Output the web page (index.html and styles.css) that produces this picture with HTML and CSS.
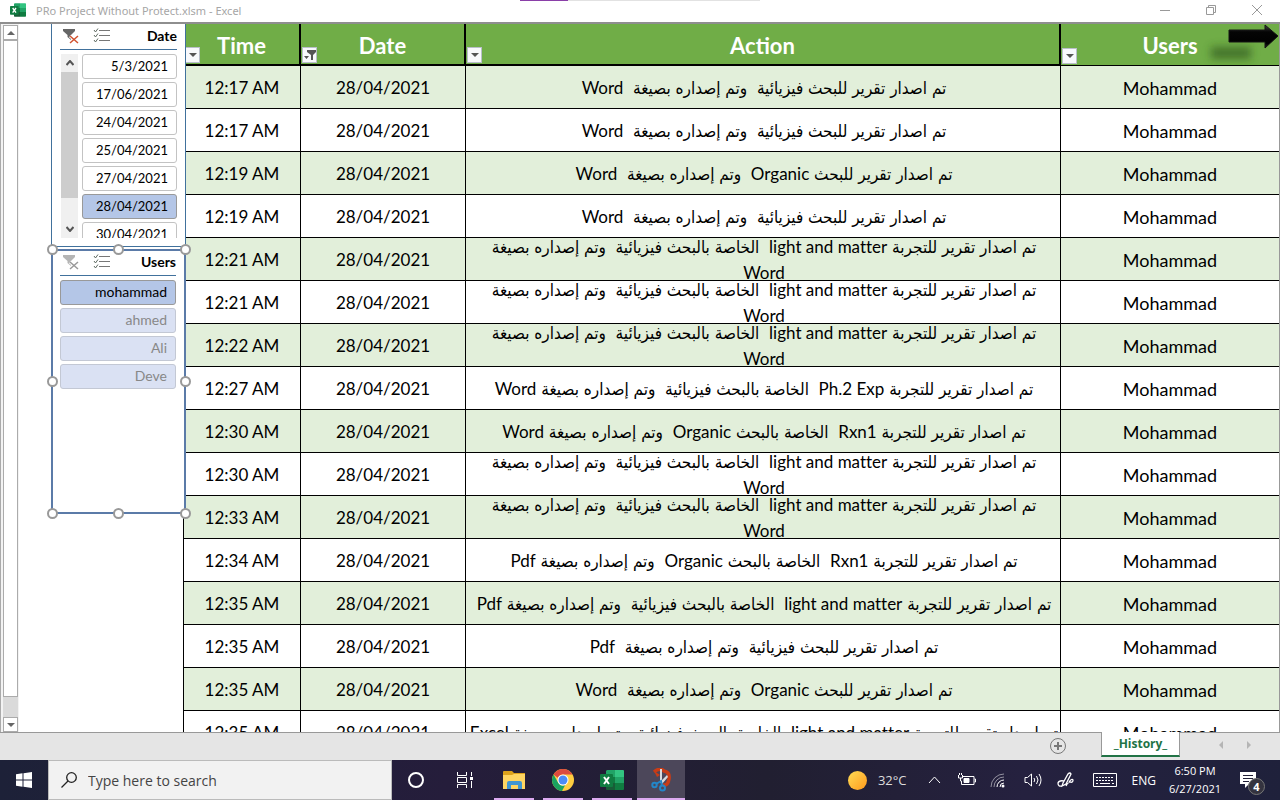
FILE: index.html
```
<!DOCTYPE html>
<html lang="en">
<head>
<meta charset="utf-8">
<title>PRo Project Without Protect.xlsm - Excel</title>
<link rel="stylesheet" href="styles.css">
</head>
<body>
<svg class="defs" aria-hidden="true">
  <symbol id="excel" viewBox="0 0 24 22">
    <path fill="#21a366" d="M7 1h8v7H6V2z"/><path fill="#33c481" d="M15 1h8q1 0 1 1v6h-9z"/>
    <path fill="#107c41" d="M6 8h9v6H6z"/><path fill="#21a366" d="M15 8h9v6h-9z"/>
    <path fill="#185c37" d="M6 14h9v7H7q-1 0-1-1z"/><path fill="#107c41" d="M15 14h9v6q0 1-1 1h-8z"/>
    <rect x="0" y="5" width="13" height="13" rx="1" fill="#107c41"/>
    <path d="M4 8l5 7M9 8l-5 7" stroke="#fff" stroke-width="2"/>
  </symbol>
  <symbol id="multi" viewBox="0 0 18 15">
    <path d="M6 2.500h11M6 7.500h11M6 12.500h11" stroke="#777" fill="none"/>
    <path d="M1 2l1.500 2L5 .5M1 7l1.500 2L5 5.500M1 12l1.500 2L5 10.500" stroke="#5f6b62" fill="none"/>
  </symbol>
  <symbol id="clear" viewBox="0 0 16 16">
    <path d="M0 1h12v2L8 7v5L4.500 9V7L0 3z" fill="currentColor"/>
    <path d="M7 8l8 7M15 8l-8 7" stroke="#fff" stroke-width="3"/>
    <path class="clear-x" d="M7 8l8 7M15 8l-8 7" stroke-width="1.500"/>
  </symbol>
</svg>

<header class="titlebar">
  <svg class="app-icon"><use href="#excel"/></svg>
  <span class="title">PRo Project Without Protect.xlsm - Excel</span>
  <span class="progress"><i></i></span>
  <div class="win-buttons">
    <button aria-label="Minimize"><svg viewBox="0 0 12 12"><path d="M1 6.500h10"/></svg></button>
    <button aria-label="Restore"><svg viewBox="0 0 12 12"><path d="M1.500 3.500h7v7h-7zM3.500 3.500v-2h7v7h-2"/></svg></button>
    <button aria-label="Close"><svg viewBox="0 0 12 12"><path d="M1 1l10 10M11 1L1 11"/></svg></button>
  </div>
</header>

<main class="workspace">
  <div class="vscroll">
    <button class="vs-btn" aria-label="Scroll up"><svg viewBox="0 0 8 4"><path d="M0 4l4-4 4 4z"/></svg></button>
    <div class="vs-thumb"></div>
    <div class="vs-gap"></div>
    <button class="vs-btn" aria-label="Scroll down"><svg viewBox="0 0 8 4"><path d="M0 0l4 4 4-4z"/></svg></button>
  </div>

  <aside class="slicers">
    <section class="slicer slicer-date">
      <div class="slicer-head">
        <button class="clear on" aria-label="Clear filter"><svg><use href="#clear"/></svg></button>
        <button class="multi" aria-label="Multi-select"><svg><use href="#multi"/></svg></button>
        <h2>Date</h2>
      </div>
      <div class="slicer-body">
        <div class="mini-scroll">
          <button aria-label="Up"><svg viewBox="0 0 8 6"><path d="M.5 5L4 1l3.500 4"/></svg></button>
          <span></span>
          <button aria-label="Down"><svg viewBox="0 0 8 6"><path d="M.5 1L4 5l3.500-4"/></svg></button>
        </div>
        <div class="items">
          <button>5/3/2021</button><button>17/06/2021</button><button>24/04/2021</button><button>25/04/2021</button><button>27/04/2021</button><button class="sel">28/04/2021</button><button>30/04/2021</button>
        </div>
      </div>
    </section>
    <section class="slicer slicer-users">
      <div class="slicer-head">
        <button class="clear" aria-label="Clear filter"><svg><use href="#clear"/></svg></button>
        <button class="multi" aria-label="Multi-select"><svg><use href="#multi"/></svg></button>
        <h2>Users</h2>
      </div>
      <div class="items">
        <button class="sel">mohammad</button><button class="off">ahmed</button><button class="off">Ali</button><button class="off">Deve</button>
      </div>
      <i class="handle t l"></i><i class="handle t c"></i><i class="handle t r"></i>
      <i class="handle m l"></i><i class="handle m r"></i>
      <i class="handle b l"></i><i class="handle b c"></i><i class="handle b r"></i>
    </section>
  </aside>

  <div class="sheet">
    <table>
      <colgroup><col class="c-time"><col class="c-date"><col><col class="c-user"></colgroup>
      <thead>
        <tr>
          <th><button class="filter" aria-label="Filter Time"><svg viewBox="0 0 8 4"><path d="M0 0h8L4 4z"/></svg></button>Time</th>
          <th><button class="filter" aria-label="Filter Date"><svg class="active" viewBox="0 0 12 10"><path d="M3 0h9v2L9 5v5H7V5L3 2zM0 6h5L2.500 9z"/></svg></button>Date</th>
          <th><button class="filter" aria-label="Filter Action"><svg viewBox="0 0 8 4"><path d="M0 0h8L4 4z"/></svg></button>Action</th>
          <th><button class="filter" aria-label="Filter Users"><svg viewBox="0 0 8 4"><path d="M0 0h8L4 4z"/></svg></button>Users
            <svg class="arrow" viewBox="0 0 80 46"><defs><linearGradient id="ag" x2="0" y2="1"><stop offset="0" stop-color="#444"/><stop offset=".3" stop-color="#050505"/><stop offset=".8" stop-color="#000"/><stop offset="1" stop-color="#2a2a2a"/></linearGradient><filter id="soft" x="-30%" y="-80%" width="160%" height="260%"><feGaussianBlur stdDeviation="4"/></filter></defs><rect x="12" y="23" width="40" height="12" fill="#274d14" opacity=".6" filter="url(#soft)"/><path d="M30 6h36V1l13 11-13 12v-6H30z" fill="url(#ag)" stroke="#151515"/></svg>
          </th>
        </tr>
      </thead>
      <tbody>
        <tr><td>12:17 AM</td><td>28/04/2021</td><td dir="rtl"><div><p>تم اصدار تقرير للبحث فيزيائية  وتم إصداره بصيغة  <b>Word</b></p></div></td><td>Mohammad</td></tr>
        <tr><td>12:17 AM</td><td>28/04/2021</td><td dir="rtl"><div><p>تم اصدار تقرير للبحث فيزيائية  وتم إصداره بصيغة  <b>Word</b></p></div></td><td>Mohammad</td></tr>
        <tr><td>12:19 AM</td><td>28/04/2021</td><td dir="rtl"><div><p>تم اصدار تقرير للبحث <b>Organic</b>  وتم إصداره بصيغة  <b>Word</b></p></div></td><td>Mohammad</td></tr>
        <tr><td>12:19 AM</td><td>28/04/2021</td><td dir="rtl"><div><p>تم اصدار تقرير للبحث فيزيائية  وتم إصداره بصيغة  <b>Word</b></p></div></td><td>Mohammad</td></tr>
        <tr><td>12:21 AM</td><td>28/04/2021</td><td dir="rtl"><div><p>تم اصدار تقرير للتجربة <b>light and matter</b>  الخاصة بالبحث فيزيائية  وتم إصداره بصيغة<br><b>Word</b></p></div></td><td>Mohammad</td></tr>
        <tr><td>12:21 AM</td><td>28/04/2021</td><td dir="rtl"><div><p>تم اصدار تقرير للتجربة <b>light and matter</b>  الخاصة بالبحث فيزيائية  وتم إصداره بصيغة<br><b>Word</b></p></div></td><td>Mohammad</td></tr>
        <tr><td>12:22 AM</td><td>28/04/2021</td><td dir="rtl"><div><p>تم اصدار تقرير للتجربة <b>light and matter</b>  الخاصة بالبحث فيزيائية  وتم إصداره بصيغة<br><b>Word</b></p></div></td><td>Mohammad</td></tr>
        <tr><td>12:27 AM</td><td>28/04/2021</td><td dir="rtl"><div><p>تم اصدار تقرير للتجربة <b>Ph.2 Exp</b>  الخاصة بالبحث فيزيائية  وتم إصداره بصيغة <b>Word</b></p></div></td><td>Mohammad</td></tr>
        <tr><td>12:30 AM</td><td>28/04/2021</td><td dir="rtl"><div><p>تم اصدار تقرير للتجربة <b>Rxn1</b>  الخاصة بالبحث <b>Organic</b>  وتم إصداره بصيغة <b>Word</b></p></div></td><td>Mohammad</td></tr>
        <tr><td>12:30 AM</td><td>28/04/2021</td><td dir="rtl"><div><p>تم اصدار تقرير للتجربة <b>light and matter</b>  الخاصة بالبحث فيزيائية  وتم إصداره بصيغة<br><b>Word</b></p></div></td><td>Mohammad</td></tr>
        <tr><td>12:33 AM</td><td>28/04/2021</td><td dir="rtl"><div><p>تم اصدار تقرير للتجربة <b>light and matter</b>  الخاصة بالبحث فيزيائية  وتم إصداره بصيغة<br><b>Word</b></p></div></td><td>Mohammad</td></tr>
        <tr><td>12:34 AM</td><td>28/04/2021</td><td dir="rtl"><div><p>تم اصدار تقرير للتجربة <b>Rxn1</b>  الخاصة بالبحث <b>Organic</b>  وتم إصداره بصيغة <b>Pdf</b></p></div></td><td>Mohammad</td></tr>
        <tr><td>12:35 AM</td><td>28/04/2021</td><td dir="rtl"><div><p>تم اصدار تقرير للتجربة <b>light and matter</b>  الخاصة بالبحث فيزيائية  وتم إصداره بصيغة <b>Pdf</b></p></div></td><td>Mohammad</td></tr>
        <tr><td>12:35 AM</td><td>28/04/2021</td><td dir="rtl"><div><p>تم اصدار تقرير للبحث فيزيائية  وتم إصداره بصيغة  <b>Pdf</b></p></div></td><td>Mohammad</td></tr>
        <tr><td>12:35 AM</td><td>28/04/2021</td><td dir="rtl"><div><p>تم اصدار تقرير للبحث <b>Organic</b>  وتم إصداره بصيغة  <b>Word</b></p></div></td><td>Mohammad</td></tr>
        <tr><td>12:35 AM</td><td>28/04/2021</td><td dir="rtl"><div><p>تم اصدار تقرير للتجربة <b>light and matter</b>  الخاصة بالبحث فيزيائية  وتم إصداره بصيغة <b>Excel</b></p></div></td><td>Mohammad</td></tr>
      </tbody>
    </table>
  </div>
</main>

<nav class="tabs">
  <button class="add" aria-label="New sheet"><svg viewBox="0 0 16 16"><circle cx="8" cy="8" r="7.500" fill="none" stroke="#777"/><path d="M8 4v8M4 8h8" stroke="#777" stroke-width="2"/></svg></button>
  <button class="tab">_History_</button>
  <div class="tab-nav">
    <button aria-label="Previous sheet"><svg viewBox="0 0 4 8"><path d="M4 0v8L0 4z"/></svg></button>
    <button aria-label="Next sheet"><svg viewBox="0 0 4 8"><path d="M0 0v8l4-4z"/></svg></button>
  </div>
</nav>

<footer class="taskbar">
  <button class="start" aria-label="Start"><svg viewBox="0 0 16 16"><path fill="#fff" d="M0 2.200L6.500 1.300v6.200H0zM7.500 1.200L16 0v7.500H7.500zM0 8.500h6.500v6.200L0 13.800zM7.500 8.500H16V16l-8.500-1.200z"/></svg></button>
  <label class="search">
    <svg viewBox="0 0 16 16"><circle cx="10.500" cy="5.500" r="4.800"/><path d="M7 9L.5 15.500"/></svg>
    <input type="text" placeholder="Type here to search" aria-label="Search">
  </label>
  <div class="apps">
    <button aria-label="Cortana"><svg viewBox="0 0 24 24"><circle cx="12" cy="12" r="7" fill="none" stroke="#fff" stroke-width="2"/></svg></button>
    <button aria-label="Task View"><svg viewBox="0 0 24 24"><path d="M4.500 4v3.500h9V4M4.500 20v-3.500h9V20M4.500 9.500h9v5h-9zM18.500 4v4M18.500 13v7" fill="none" stroke="#fff"/><path d="M17 9h3v3h-3z" fill="#fff"/></svg></button>
    <button class="run" aria-label="File Explorer"><svg viewBox="0 0 24 24"><path d="M1 4q0-1 1-1h8l2 2h11v4H1z" fill="#dda21b"/><path d="M1 7h9l2-1h11v15H1z" fill="#ffd561"/><path d="M5 21v-6q0-2 2-2h11q2 0 2 2v6h-4v-4H9v4z" fill="#4096d2"/></svg></button>
    <button class="run" aria-label="Chrome"><svg viewBox="0 0 24 24"><circle cx="12" cy="12" r="11" fill="#ffcd40"/><path d="M2.500 6.500A11 11 0 0 1 21.500 6.500H12a5.500 5.500 0 0 0-5 3.500z" fill="#dc4b3e"/><path d="M2.500 6.500L7.200 14.800a5.500 5.500 0 0 0 7 2.200L11 23A11 11 0 0 1 2.500 6.500z" fill="#1aa260"/><circle cx="12" cy="12" r="5.500" fill="#fff"/><circle cx="12" cy="12" r="4.500" fill="#4c8bf5"/></svg></button>
    <button class="run" aria-label="Excel"><svg><use href="#excel"/></svg></button>
    <button class="run current" aria-label="Snipping Tool"><svg viewBox="0 0 24 24"><path d="M5 4q6-5 10-1 6 1 5 8-1 7-6 6" fill="none" stroke="#c83c16" stroke-width="3.500"/><path d="M5 3l6 4-3 2z" fill="#c83c16"/><path d="M11 1h2v14h-2zM12 13l6-6 1 2-6 7z" fill="#d8dadd"/><circle cx="5.500" cy="17" r="2.200" fill="none" stroke="#2386c8" stroke-width="2"/><circle cx="13.500" cy="20" r="2.500" fill="none" stroke="#2386c8" stroke-width="2"/><path d="M7 16l5-3 1 5" fill="none" stroke="#2386c8" stroke-width="2"/></svg></button>
  </div>
  <div class="tray">
    <i class="sun"></i><span class="temp">32°C</span>
    <button aria-label="Show hidden icons"><svg viewBox="0 0 20 20"><path d="M5 13l5.500-6 5.500 6"/></svg></button>
    <button aria-label="Battery"><svg viewBox="0 0 20 20"><path d="M6 6.500h11v8H4.500V11M17.500 9h1v3h-1M1.500 5v3h4V5M2.500 3v2M4.500 3v2M3.500 8v3h1"/><path d="M7 8.500h5v4H7z" fill="#fff"/></svg></button>
    <button aria-label="Wi-Fi"><svg viewBox="0 0 20 20"><path d="M7 17a7 7 0 0 1 7-7M10 17a4 4 0 0 1 4-4"/><path d="M1 17A13 13 0 0 1 14 4M4 17A10 10 0 0 1 14 7" opacity=".5"/><circle cx="13" cy="16" r="1.500" fill="#fff" stroke="none"/></svg></button>
    <button aria-label="Volume"><svg viewBox="0 0 20 20"><path d="M2 7.500h2.500L8.500 4v12l-4-3.500H2zM11 8q1.500 2 0 4M13.500 6q3 4 0 8M16 4q4 6 0 12"/></svg></button>
    <button aria-label="Pen"><svg viewBox="0 0 20 20"><path d="M7 13L12 4q2-2 3 0L10 14l-4 2zM8 11q-5-1-6 2 0 4 4 3M13 12q3-4 4-2 0 3-3 2-3 1-4 4" stroke-width="1.300"/></svg></button>
    <button class="kbd" aria-label="Touch keyboard"><svg viewBox="0 0 24 14"><path d="M.5 .5h23v13H.5z"/><path d="M3 4.500h18M3 7.500h18" stroke-dasharray="2 1"/><path d="M3 10.500h2M7 10.500h10M19 10.500h2"/></svg></button>
    <span class="lang">ENG</span>
    <time class="clock">6:50 PM<br>6/27/2021</time>
    <button class="notice" aria-label="Notifications"><svg viewBox="0 0 16 16"><path d="M0 0h16v12H9l-4 4v-4H0z" fill="#fff" stroke="none"/><path d="M3 3.500h10M3 6.500h10M3 9.500h6" stroke="#222038"/></svg><span class="badge">4</span></button>
  </div>
</footer>
</body>
</html>
```
FILE: styles.css
```
* { box-sizing: border-box; }
body { margin: 0; height: 100vh; display: flex; flex-direction: column; overflow: hidden; background: #fff; font-family: "Open Sans", "Noto Sans", sans-serif; }
button { margin: 0; padding: 0; border: 0; background: none; font: inherit; color: inherit; display: flex; align-items: center; justify-content: center; }
svg { display: block; flex: none; }
.defs { position: absolute; width: 0; height: 0; }

.titlebar { position: relative; flex: none; height: 24px; display: flex; align-items: center; padding: 0 17px 2px 10px; border-bottom: 2px solid #8e8e8e; color: #a6a6a6; }
.app-icon { width: 16px; height: 16px; }
.title { margin-left: 10px; font-family: "Noto Sans", sans-serif; font-size: 11px; }
.progress { position: absolute; top: 0; left: 40.6%; width: 18.8%; height: 1px; background: #e2e2e2; }
.progress i { display: block; width: 20%; height: 1px; background: #8a3fa8; }
.win-buttons { margin-left: auto; display: flex; gap: 34px; }
.win-buttons svg { width: 12px; height: 12px; fill: none; stroke: #999; }

.workspace { flex: 1; min-height: 0; display: flex; overflow: hidden; }
.vscroll { flex: none; width: 19px; display: flex; flex-direction: column; border-left: 1px solid #aaa; padding: 1px 1px 0 2px; background: #f3f3f3; }
.vs-btn { height: 15px; flex: none; border: 1px solid #ababab; background: #fff; }
.vs-btn svg { width: 8px; height: 4px; fill: #666; }
.vs-thumb { flex: 1; border: 1px solid #ababab; background: #fff; }
.vs-gap { height: 20px; background: #dadada; }

.slicers { position: relative; z-index: 1; flex: none; width: 164px; padding-left: 32px; display: flex; flex-direction: column; gap: 2px; }
.slicer { width: 135px; background: #fff; border: 1px solid #41719c; padding: 0 8px; font-family: Lato, sans-serif; font-size: 13px; color: #000; }
.slicer-date { height: 223px; border-top: 0; }
.slicer-users { position: relative; height: 265px; border: 2px solid #5b7ba8; padding: 0 8px 0 7px; font-size: 14px; }
.slicer-head { display: flex; align-items: center; height: 26px; border-bottom: 1px solid #41719c; padding: 0 0 2px 3px; }
.slicer-users .slicer-head { height: 25px; padding-bottom: 3px; }
.slicer-head h2 { margin: 0 0 0 auto; font-size: 14px; font-weight: 700; }
.slicer-head .clear svg { width: 16px; height: 16px; }
.slicer-head .multi { margin-left: 14px; }
.slicer-head .multi svg { width: 18px; height: 15px; }
.clear { color: #b5b5b5; --cross: #999; }
.clear.on { color: #666; --cross: #d2522f; }
.clear-x { stroke: var(--cross); }
.slicer-body { display: flex; gap: 4px; height: 188px; padding-top: 4px; overflow: hidden; }
.mini-scroll { width: 17px; margin-left: 1px; flex: none; display: flex; flex-direction: column; background: #f0f0f0; }
.mini-scroll button { height: 18px; flex: none; }
.mini-scroll svg { width: 8px; height: 6px; fill: none; stroke: #555; stroke-width: 2; }
.mini-scroll span { height: 126px; background: #cdcdcd; margin-bottom: auto; }
.items { flex: 1; display: flex; flex-direction: column; gap: 3px; }
.slicer-users .items { padding-top: 4px; }
.items button { flex: none; height: 25px; padding: 0 8px 2px; justify-content: flex-end; border: 1px solid #c3c3c3; border-radius: 3px; background: #fff; }
.items .sel { background: #b4c6e7; border-color: #999; }
.items .off { background: #dae1f3; border-color: #c3c8d4; color: #888; }
.handle { position: absolute; width: 11px; height: 11px; border: 2px solid #999; border-radius: 50%; background: #fff; }
.handle.t { top: -7px; } .handle.m { top: 125px; } .handle.b { bottom: -7px; }
.handle.l { left: -6px; } .handle.c { left: 60px; } .handle.r { right: -7px; }

.sheet { flex: 1; min-width: 0; overflow: hidden; border-right: 1px solid #999; }
table { width: 100%; table-layout: fixed; border-collapse: separate; border-spacing: 0; font-family: Lato, "DejaVu Sans Condensed", sans-serif; font-size: 17px; color: #000; border-left: 1px solid #000; }
.c-time { width: 117px; } .c-date { width: 165px; } .c-user { width: 218px; }
th { position: relative; height: 42px; padding: 3px 0 0; background: #70ad47; color: #fff; font-size: 22px; line-height: 26px; border-right: 2px solid #000; border-bottom: 2px solid #000; }
th:last-child { border-right: 0; border-bottom-width: 1px; }
td { height: 43px; padding: 1px 0 0; text-align: center; white-space: pre; border-right: 1px solid #000; border-bottom: 1px solid #000; }
td:last-child { border-right: 0; font-size: 18px; }
tbody tr:nth-child(odd) { background: #e2efda; }
td div { height: 41px; display: flex; flex-direction: column; justify-content: center; overflow: hidden; font-family: "DejaVu Sans Condensed", sans-serif; }
td p { flex: none; margin: 0; padding-top: 1px; line-height: 26px; }
td b { font-family: Lato, sans-serif; font-weight: 400; font-size: 17px; line-height: 20px; font-variant-ligatures: none; }
.filter { position: absolute; left: 1px; bottom: 1px; width: 15px; height: 16px; border: 1px solid #b9bfc9; background: #f8f9fc; }
.filter svg { width: 8px; height: 4px; fill: #555; }
.filter .active { width: 12px; height: 10px; }
.arrow { position: absolute; top: 0; right: 0; width: 80px; height: 46px; }

.tabs { flex: none; height: 28px; display: flex; align-items: flex-start; background: #e5e5e5; border-top: 1px solid #999; padding-right: 29px; }
.add { margin: 5px 35px 0 auto; }
.add svg { width: 16px; height: 16px; }
.tab { width: 79px; height: 25px; margin-top: -1px; background: #fff; border: 1px solid #999; border-top: 0; border-bottom: 2px solid #217346; color: #217346; font-size: 12px; font-weight: 700; }
.tab-nav { display: flex; gap: 24px; margin: 8px 0 0 39px; }
.tab-nav svg { width: 4px; height: 8px; fill: #b5b5b5; }

.taskbar { flex: none; height: 40px; display: flex; background: linear-gradient(90deg, #1d2138, #251d3b 35%, #211f31 60%, #25213f 80%, #1f213b); color: #fff; }
.start { width: 48px; }
.start svg { width: 16px; height: 16px; }
.search { width: 344px; display: flex; align-items: center; background: #f2f2f2; border: 1px solid #bbb; padding-left: 12px; gap: 11px; }
.search svg { width: 16px; height: 16px; fill: none; stroke: #222; stroke-width: 1.300; }
.search input { flex: 1; min-width: 0; border: 0; padding: 0; background: none; outline: 0; font: 14px "Open Sans", sans-serif; color: #444; }
.search input::placeholder { color: #444; opacity: 1; }
.apps { display: flex; gap: 1px; }
.apps button { width: 48px; }
.apps svg { width: 24px; height: 24px; }
.apps .run { background: linear-gradient(#dcaaf0, #dcaaf0) center bottom / 40px 2px no-repeat; }
.apps .run.current { background-color: #4c475a; background-size: 48px 2px; }
.tray { margin-left: auto; display: flex; align-items: center; padding-right: 14px; font-size: 12px; }
.sun { width: 19px; height: 19px; border-radius: 50%; background: linear-gradient(135deg, #ffdc55, #ff9a1c); }
.temp { margin: 0 17px 0 11px; font-size: 13px; color: #ddd; }
.tray button { width: 20px; margin-right: 13px; }
.tray svg { width: 20px; height: 20px; fill: none; stroke: #fff; }
.tray .kbd { width: 24px; margin: 0 15px 0 4px; }
.tray .kbd svg { width: 24px; height: 14px; }
.clock { margin-left: 12px; width: 54px; text-align: center; line-height: 18px; font-size: 11px; }
.tray .notice { position: relative; width: 26px; height: 28px; margin: 0 0 0 18px; align-items: flex-start; justify-content: flex-start; padding-top: 6px; }
.tray .notice svg { width: 16px; height: 16px; }
.badge { position: absolute; right: 1px; bottom: -1px; width: 17px; height: 17px; border: 1px solid #777; border-radius: 50%; background: #34333f; font-size: 11px; line-height: 15px; font-weight: 700; text-align: center; }
```
